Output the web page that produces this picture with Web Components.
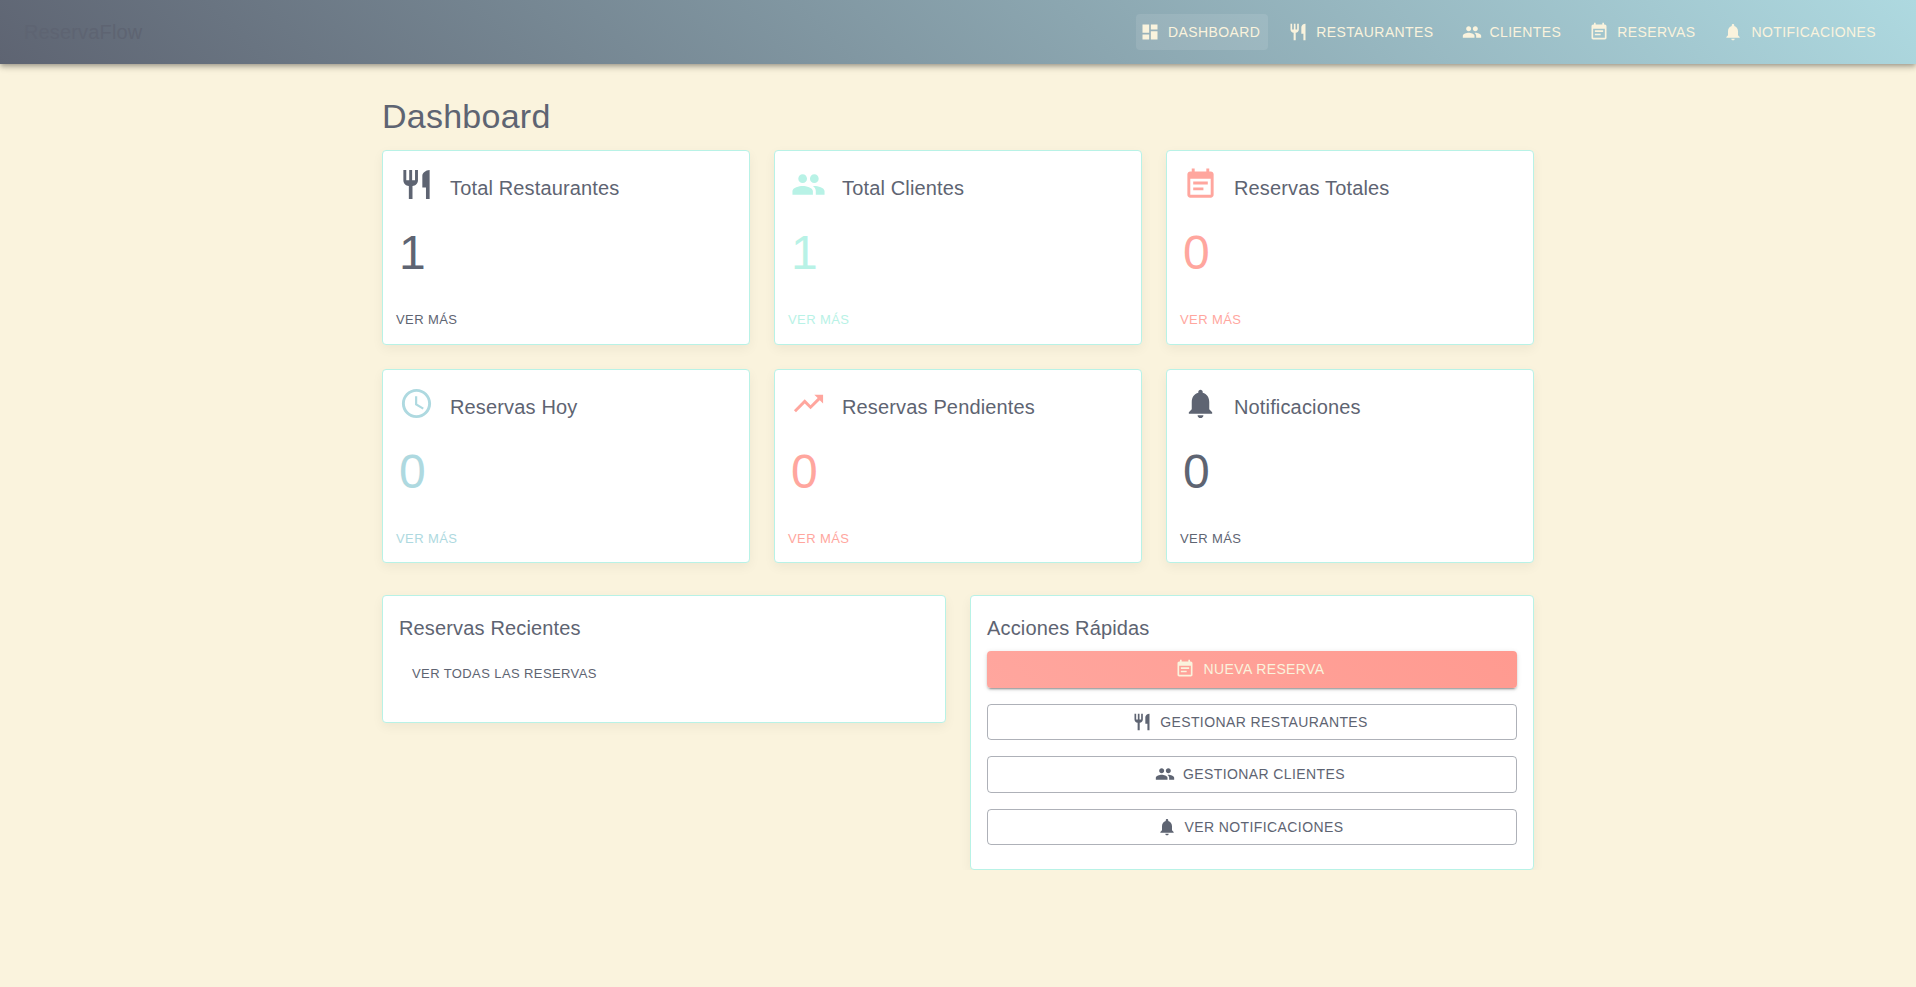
<!DOCTYPE html>
<html lang="es">
<head>
<meta charset="utf-8">
<title>ReservaFlow</title>
<style>
  html, body { margin: 0; min-height: 100%; background: #faf3dd; }
  body { font-family: "Liberation Sans", Arial, sans-serif; color: #5e6472; }
</style>
</head>
<body>
<rf-app></rf-app>
<script>
const ICONS = {
  dashboard: 'M3 13h8V3H3v10zm0 8h8v-6H3v6zm10 0h8V11h-8v10zm0-18v6h8V3h-8z',
  restaurant: 'M11 9H9V2H7v7H5V2H3v7c0 2.12 1.66 3.84 3.75 3.97V22h2.5v-9.03C11.34 12.84 13 11.12 13 9V2h-2v7zm5-3v8h2.5v8H21V2c-2.76 0-5 2.24-5 4z',
  people: 'M16 11c1.66 0 2.99-1.34 2.99-3S17.66 5 16 5c-1.66 0-3 1.34-3 3s1.34 3 3 3zm-8 0c1.66 0 2.99-1.34 2.99-3S9.66 5 8 5C6.34 5 5 6.34 5 8s1.34 3 3 3zm0 2c-2.33 0-7 1.17-7 3.5V19h14v-2.5c0-2.33-4.67-3.5-7-3.5zm8 0c-.29 0-.62.02-.97.05 1.16.84 1.97 1.97 1.97 3.45V19h6v-2.5c0-2.33-4.67-3.5-7-3.5z',
  event: 'M17 10H7v2h10v-2zm2-7h-1V1h-2v2H8V1H6v2H5c-1.11 0-1.99.9-1.99 2L3 19c0 1.1.89 2 2 2h14c1.1 0 2-.9 2-2V5c0-1.1-.9-2-2-2zm0 16H5V8h14v11zm-5-5H7v2h7v-2z',
  clock: 'M11.99 2C6.47 2 2 6.48 2 12s4.47 10 9.99 10C17.52 22 22 17.52 22 12S17.52 2 11.99 2zM12 20c-4.42 0-8-3.58-8-8s3.58-8 8-8 8 3.58 8 8-3.58 8-8 8zm.5-13H11v6l5.25 3.15.75-1.23-4.5-2.67z',
  trending: 'M16 6l2.29 2.29-4.88 4.88-4-4L2 16.59 3.41 18l6-6 4 4 6.3-6.29L22 12V6z',
  bell: 'M12 22c1.1 0 2-.9 2-2h-4c0 1.1.89 2 2 2zm6-6v-5c0-3.07-1.64-5.64-4.5-6.32V4c0-.83-.67-1.5-1.5-1.5s-1.5.67-1.5 1.5v.68C7.63 5.36 6 7.92 6 11v5l-2 2v1h16v-1l-2-2z'
};

const iconTemplate = document.createElement('template');
iconTemplate.innerHTML = `
  <style>
    :host { display: block; flex: none; width: var(--icon-size, 20px); height: var(--icon-size, 20px); }
    svg { display: block; width: 100%; height: 100%; fill: currentColor; }
  </style>
  <svg viewBox="0 0 24 24" aria-hidden="true"><path/></svg>`;

class RfIcon extends HTMLElement {
  static get observedAttributes() { return ['name']; }
  constructor() {
    super();
    this.attachShadow({ mode: 'open' }).appendChild(iconTemplate.content.cloneNode(true));
  }
  attributeChangedCallback(attr, old, value) {
    this.shadowRoot.querySelector('path').setAttribute('d', ICONS[value] || '');
  }
}

// boton de MUI: variant = text | contained | outlined
const buttonTemplate = document.createElement('template');
buttonTemplate.innerHTML = `
  <style>
    :host { display: inline-flex; box-sizing: border-box; height: 36.5px; align-items: center; justify-content: center;
      padding: 6px 8px; border-radius: 4px; color: inherit; white-space: nowrap;
      font: 500 14px/24.5px "Liberation Sans", Arial, sans-serif; letter-spacing: .4px; text-transform: uppercase; }
    :host([active]) { background: rgba(255,255,255,.1); }
    :host([variant=contained]) { display: flex; background: linear-gradient(45deg, #ffa69e, #ff9a90); color: #faf3dd;
      box-shadow: 0 3px 1px -2px rgba(0,0,0,.2), 0 2px 2px 0 rgba(0,0,0,.14), 0 1px 5px 0 rgba(0,0,0,.12); }
    :host([variant=outlined]) { display: flex; border: 1px solid rgba(94,100,114,.5); color: #5e6472; }
    .start { margin: 0 8px 0 -4px; }
  </style>
  <div class="start"><slot name="icon"></slot></div><slot></slot>`;

class RfButton extends HTMLElement {
  constructor() {
    super();
    this.attachShadow({ mode: 'open' }).appendChild(buttonTemplate.content.cloneNode(true));
  }
}

const navTemplate = document.createElement('template');
navTemplate.innerHTML = `
  <style>
    :host { display: flex; align-items: center; height: 64px; padding: 0 24px; position: relative; z-index: 2;
      background: linear-gradient(45deg, #5e6472, #aed9e0); color: #faf3dd;
      box-shadow: 0 2px 4px -1px rgba(0,0,0,.2), 0 4px 5px 0 rgba(0,0,0,.14), 0 1px 10px 0 rgba(0,0,0,.12); }
    .logo { flex: 1; font-size: 20px; line-height: 32px; letter-spacing: .15px; color: #5e6472; }
    nav { display: flex; gap: 16px; margin-right: 8px; }
  </style>
  <div class="logo">ReservaFlow</div>
  <nav>
    <rf-button active><rf-icon slot="icon" name="dashboard"></rf-icon>Dashboard</rf-button>
    <rf-button><rf-icon slot="icon" name="restaurant"></rf-icon>Restaurantes</rf-button>
    <rf-button><rf-icon slot="icon" name="people"></rf-icon>Clientes</rf-button>
    <rf-button><rf-icon slot="icon" name="event"></rf-icon>Reservas</rf-button>
    <rf-button><rf-icon slot="icon" name="bell"></rf-icon>Notificaciones</rf-button>
  </nav>`;

class RfNav extends HTMLElement {
  constructor() {
    super();
    this.attachShadow({ mode: 'open' }).appendChild(navTemplate.content.cloneNode(true));
  }
}

const statTemplate = document.createElement('template');
statTemplate.innerHTML = `
  <style>
    :host { display: block; box-sizing: border-box; height: 194.07px; background: #fff; border: 1px solid #b8f2e6; border-radius: 4px;
      box-shadow: 0 4px 12px rgba(0,0,0,.05); padding: 16px 0 0; }
    .head { display: flex; gap: 16px; height: 57.5px; padding: 0 16px; --icon-size: 35px; }
    h2 { margin: 5px 0 0; font-size: 20px; font-weight: 400; line-height: 32px; letter-spacing: .15px; color: #5e6472; }
    .value { padding: 0 16px; font-size: 48px; line-height: 56px; }
    .more { display: block; margin: 28px 0 0 8px; padding-left: 5px; font-size: 13px; line-height: 22.75px; letter-spacing: .4px; text-transform: uppercase; }
  </style>
  <div class="head"><rf-icon id="icon"></rf-icon><h2 id="title"></h2></div>
  <div class="value" id="value"></div>
  <span class="more">Ver más</span>`;

class RfStat extends HTMLElement {
  constructor() {
    super();
    this.attachShadow({ mode: 'open' }).appendChild(statTemplate.content.cloneNode(true));
  }
  connectedCallback() {
    const root = this.shadowRoot;
    this.style.color = this.getAttribute('color');
    root.getElementById('icon').setAttribute('name', this.getAttribute('icon'));
    root.getElementById('title').textContent = this.getAttribute('heading');
    root.getElementById('value').textContent = this.getAttribute('value');
  }
}

const panelTemplate = document.createElement('template');
panelTemplate.innerHTML = `
  <style>
    :host { display: block; box-sizing: border-box; background: #fff; border: 1px solid #b8f2e6; border-radius: 4px;
      box-shadow: 0 4px 12px rgba(0,0,0,.05); padding: 16px 16px 24px; }
    h2 { margin: 0 0 7px; font-size: 20px; font-weight: 400; line-height: 32px; letter-spacing: .15px; color: #5e6472; }
  </style>
  <h2 id="title"></h2>
  <slot></slot>`;

class RfPanel extends HTMLElement {
  constructor() {
    super();
    this.attachShadow({ mode: 'open' }).appendChild(panelTemplate.content.cloneNode(true));
  }
  connectedCallback() {
    this.shadowRoot.getElementById('title').textContent = this.getAttribute('heading');
  }
}

const appTemplate = document.createElement('template');
appTemplate.innerHTML = `
  <style>
    :host { display: block; }
    main { width: 1152px; margin: 0 auto; padding-top: 31px; }
    h1 { margin: 0 0 13.47px; font-size: 34px; font-weight: 400; line-height: 42px; letter-spacing: .25px; color: #5e6472; }
    .stats { display: grid; grid-template-columns: repeat(3, 368px); gap: 24.89px 24px; }
    .bottom { display: grid; grid-template-columns: repeat(2, 564px); gap: 24px; align-items: start; margin-top: 31.72px; }
    .link { padding: 11.4px 0 13px 13px; font-size: 13px; line-height: 22.75px; letter-spacing: .4px; text-transform: uppercase; }
    .actions { display: flex; flex-direction: column; gap: 16px; }
  </style>
  <rf-nav></rf-nav>
  <main>
    <h1>Dashboard</h1>
    <section class="stats">
      <rf-stat icon="restaurant" heading="Total Restaurantes" value="1" color="#5e6472"></rf-stat>
      <rf-stat icon="people" heading="Total Clientes" value="1" color="#b8f2e6"></rf-stat>
      <rf-stat icon="event" heading="Reservas Totales" value="0" color="#ffa69e"></rf-stat>
      <rf-stat icon="clock" heading="Reservas Hoy" value="0" color="#aed9e0"></rf-stat>
      <rf-stat icon="trending" heading="Reservas Pendientes" value="0" color="#ffa69e"></rf-stat>
      <rf-stat icon="bell" heading="Notificaciones" value="0" color="#5e6472"></rf-stat>
    </section>
    <section class="bottom">
      <rf-panel heading="Reservas Recientes">
        <div class="link">Ver todas las reservas</div>
      </rf-panel>
      <rf-panel heading="Acciones Rápidas">
        <div class="actions">
          <rf-button variant="contained"><rf-icon slot="icon" name="event"></rf-icon>Nueva Reserva</rf-button>
          <rf-button variant="outlined"><rf-icon slot="icon" name="restaurant"></rf-icon>Gestionar Restaurantes</rf-button>
          <rf-button variant="outlined"><rf-icon slot="icon" name="people"></rf-icon>Gestionar Clientes</rf-button>
          <rf-button variant="outlined"><rf-icon slot="icon" name="bell"></rf-icon>Ver Notificaciones</rf-button>
        </div>
      </rf-panel>
    </section>
  </main>`;

class RfApp extends HTMLElement {
  constructor() {
    super();
    this.attachShadow({ mode: 'open' }).appendChild(appTemplate.content.cloneNode(true));
  }
}

customElements.define('rf-icon', RfIcon);
customElements.define('rf-button', RfButton);
customElements.define('rf-nav', RfNav);
customElements.define('rf-stat', RfStat);
customElements.define('rf-panel', RfPanel);
customElements.define('rf-app', RfApp);
</script>
</body>
</html>
